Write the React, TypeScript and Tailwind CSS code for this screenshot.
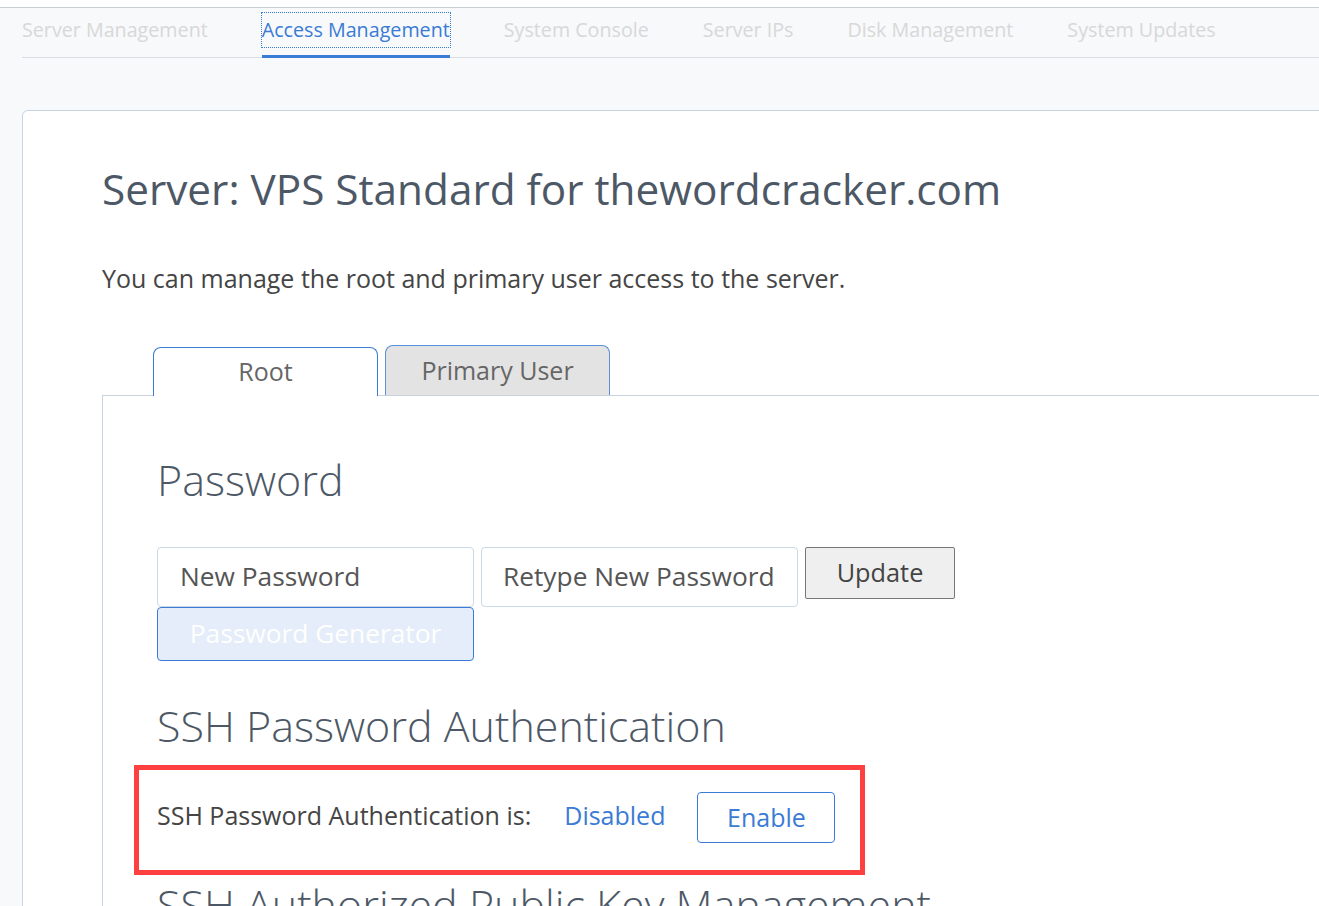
import React from 'react'

const navItems = [
  'Server Management',
  'Access Management',
  'System Console',
  'Server IPs',
  'Disk Management',
  'System Updates',
]

export default function App() {
  const active = 'Access Management'

  return (
    <div className="h-screen overflow-hidden bg-[#f7f9fb] font-['Open_Sans',sans-serif]">
      {/* top strip */}
      <div className="h-[8px] bg-white border-b border-[#c9ced3]" />

      {/* section nav */}
      <nav className="ml-[22px] flex gap-[54px] border-b border-[#d9dde1]">
        {navItems.map(item => {
          const on = item === active
          return (
            <div
              key={item}
              className={`pt-[5px] pb-[8px] -mb-px border-b-[3px] text-[19.7px] ${
                on ? 'border-[#3a7bd5] text-[#3a7bd5]' : 'border-transparent text-[#d8d8d8]'
              }`}
            >
              <span
                className={`inline-block py-[4px] leading-[26px] whitespace-nowrap ${
                  on ? 'outline outline-dotted outline-[#3a7bd5]' : ''
                }`}
              >
                {item}
              </span>
            </div>
          )
        })}
      </nav>

      {/* card */}
      <div className="mt-[52px] ml-[22px] -mr-[40px] rounded-[6px] border border-[#c5d5e5] bg-white pl-[79px] pt-[53px]">
        <h1 className="text-[42.3px] leading-[50px] text-[#4d5866] whitespace-nowrap">
          Server: VPS Standard for thewordcracker.com
        </h1>
        <p className="mt-[49px] text-[25px] leading-[30px] text-[#454545] whitespace-nowrap">
          You can manage the root and primary user access to the server.
        </p>

        {/* tabs */}
        <div className="mt-[52px] pl-[51px] flex items-end gap-[7px] -mb-px relative z-10">
          <div className="w-[225px] h-[49px] bg-white border border-b-0 border-[#3a7bd5] rounded-t-[8px] flex items-center justify-center text-[25px] text-[#666]">
            Root
          </div>
          <div className="w-[225px] h-[50px] mb-px bg-[#e3e3e3] border border-b-0 border-[#5a90d8] rounded-t-[8px] flex items-center justify-center text-[25px] text-[#666]">
            Primary User
          </div>
        </div>

        {/* tab panel */}
        <div className="border border-[#c8d2dc] pl-[54px] pt-[57px] pb-[200px]">
          <h2 className="text-[43px] leading-[53px] font-light text-[#4d5866]">Password</h2>

          <div className="mt-[41px] flex items-start gap-[7px]">
            <div className="w-[317px] h-[60px] rounded-[4px] border border-[#c9d9e6] bg-white flex items-center pl-[22px] text-[26.3px] text-[#555]">
              New Password
            </div>
            <div className="w-[317px] h-[60px] rounded-[4px] border border-[#c9d9e6] bg-white flex items-center pl-[21px] text-[26.3px] text-[#555]">
              Retype New Password
            </div>
            <button className="w-[150px] h-[52px] rounded-[2px] border border-[#777] bg-[#efefef] text-[25.3px] text-[#444]">
              Update
            </button>
          </div>
          <button className="w-[317px] h-[54px] rounded-[4px] border border-[#3a7bd5] bg-[#e4edf9] text-[26.3px] text-white">
            Password Generator
          </button>

          <h2 className="mt-[38px] text-[43px] leading-[53px] font-light text-[#4d5866] whitespace-nowrap">
            SSH Password Authentication
          </h2>

          <div className="mt-[13px] -ml-[23px] w-[731px] h-[110px] border-[5px] border-[#ff4040] pl-[18px] pt-[22px] flex items-start">
            <span className="mt-[9px] text-[25px] leading-[28px] text-[#454545] whitespace-nowrap">
              SSH Password Authentication is:
            </span>
            <span className="mt-[9px] ml-[33px] text-[25px] leading-[28px] text-[#3a7bd5]">Disabled</span>
            <button className="ml-[32px] w-[138px] h-[51px] rounded-[4px] border border-[#3a7bd5] bg-white text-[25px] text-[#3a7bd5]">
              Enable
            </button>
          </div>

          <h2 className="mt-[3px] text-[43px] leading-[53px] font-light text-[#4d5866] whitespace-nowrap">
            SSH Authorized Public Key Management
          </h2>
        </div>
      </div>
    </div>
  )
}
